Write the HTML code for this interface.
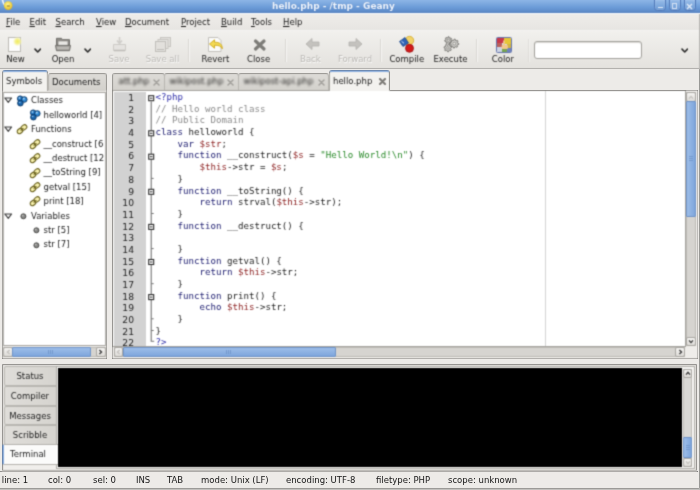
<!DOCTYPE html>
<html>
<head>
<meta charset="utf-8">
<title>hello.php - /tmp - Geany</title>
<style>
*{box-sizing:border-box;margin:0;padding:0}
html,body{width:700px;height:490px;overflow:hidden;background:#edebe8}
body{font-family:"DejaVu Sans","Liberation Sans",sans-serif;font-size:9px;color:#1a1a1a;position:relative}
#root{position:absolute;left:0;top:0;width:700px;height:490px;overflow:hidden;filter:url(#soft)}
.abs{position:absolute}
#title{left:0;top:0;width:700px;height:14px;background:linear-gradient(#8db5e6,#6c9cd8 55%,#5f8dcb 85%,#5a84c0);border-bottom:1px solid #f6f8fb}
#title .t{left:272px;top:0;height:13px;line-height:12px;white-space:nowrap;color:#f1f6fd;font-weight:bold;font-size:9px;text-shadow:0 0 1px #4a74b4}
.wb{top:-1px;width:12px;height:11.500px;border:1px solid #5078b8;border-radius:0 0 3.500px 3.500px;background:rgba(255,255,255,.08);box-shadow:inset 0 0 0 .5px rgba(255,255,255,.18)}
#menu{left:0;top:14px;width:700px;height:16px;background:linear-gradient(#eeece9,#e7e5e2)}
#menu span{position:absolute;top:-1px;line-height:18px;font-size:8.5px;white-space:nowrap}
#menu u{text-decoration:underline}
#tb{left:0;top:30px;width:700px;height:39px;background:linear-gradient(#f6f5f3 0,#f1f0ed 1.5px,#e4e2de);border-bottom:1px solid #d6d4d0}
.lbl{position:absolute;top:23.800px;font-size:8.5px;line-height:11px;text-align:center;white-space:nowrap;transform:translateX(-50%)}
.dis{color:#b9b7b3;text-shadow:0.5px 0.5px 0 #fff}
.sep{position:absolute;top:9px;width:1px;height:23px;background:#d9d7d3;border-right:1px solid #f6f5f3;box-sizing:content-box}
.chev{position:absolute;width:7.500px;height:5.500px}

/* notebook + panes */
.tab{z-index:2;position:absolute;font-size:8.5px;white-space:nowrap;border:1px solid #b8b6b1;border-bottom:none;border-radius:3px 3px 0 0;background:linear-gradient(#dddbd7,#d3d1cc)}
.tab.sel{z-index:3;background:#f3f2ef;border-color:#a9a7a2;border-top:2px solid #86a9d9}
.tab span{position:absolute;white-space:nowrap}
.blur{filter:blur(.9px);color:#2e2d2b}
.tab .blurx{filter:blur(.7px)}
.pane{position:absolute;background:#fff;border:1px solid #a9a7a2}
.row{position:absolute;left:0;height:14px;line-height:14px;font-size:8.5px;white-space:nowrap;color:#222}
.row span{position:absolute;top:0}
.row .ic{position:absolute;top:1.2px;margin-left:-.7px}
.row .tr{position:absolute;left:1px;top:4px}
.tri{position:absolute;width:0;height:0;border-left:3.5px solid transparent;border-right:3.5px solid transparent;border-top:5px solid #555}
.sb{position:absolute;background:#d6d4d0;border:1px solid #bcbab5}
.thumb{position:absolute;background:linear-gradient(#9dbde8,#7ea6dc);border:1px solid #6e93c8;border-radius:1px}
.thumbv{background:linear-gradient(90deg,#9dbde8,#7ea6dc)}
.grip{position:absolute;width:5px;height:4px;background:repeating-linear-gradient(90deg,#6e93c8 0 1px,transparent 1px 2px);opacity:.8}
.gripv{position:absolute;width:4px;height:5px;background:repeating-linear-gradient(#6e93c8 0 1px,transparent 1px 2px);opacity:.8}
.sbtn{position:absolute;background:linear-gradient(#f4f3f1,#dddbd7);border:1px solid #a9a7a2;border-radius:2px}
#code{position:absolute;left:155.5px;top:92px;font-family:"DejaVu Sans Mono","Liberation Mono",monospace;font-size:9.14px;line-height:11.7px;white-space:pre;color:#1c1c1c}
#code div{height:11.7px}
#ln{position:absolute;left:113px;top:92px;width:21px;text-align:right;font-family:"DejaVu Sans","Liberation Sans",sans-serif;font-size:9.2px;line-height:11.7px;color:#222}
#ln div{height:11.7px}
.k{color:#1a1a6e}.c{color:#8a8a8a}.v{color:#8a1c1c}.s{color:#2a8a2a}.t{color:#2c2ca8}
.fold{position:absolute;left:148px;width:7px;height:7px;border:1px solid #444;background:#fff}
.fold:after{content:"";position:absolute;left:1px;top:2px;width:3px;height:1px;background:#444}
.btab{position:absolute;left:4px;width:52.500px;height:20px;font-size:8.5px;line-height:18px;text-align:center;border:1px solid #b8b6b1;border-right:none;border-radius:2px 0 0 2px;background:linear-gradient(90deg,#dfddd9,#d6d4cf);padding-right:1.500px;color:#222}
.btab.sel{background:#fbfbfa;border-color:#b5b3ae;border-left:2.500px solid #7fa3d6;left:1.500px;width:56px;z-index:3;padding-right:5px}
#status span{position:absolute;top:0;line-height:18px;font-size:8.5px;white-space:nowrap;color:#222}
</style>
</head>
<body><svg width="0" height="0" style="position:absolute"><defs><filter id="soft" x="0" y="0" width="100%" height="100%" color-interpolation-filters="sRGB"><feConvolveMatrix order="3" kernelMatrix="0.0311 0.1141 0.0311 0.1141 0.4191 0.1141 0.0311 0.1141 0.0311" edgeMode="duplicate" preserveAlpha="true"/></filter></defs></svg><div id="root">
<div id="title" class="abs">
  <svg class="abs" style="left:1px;top:0" width="16" height="12" viewBox="0 0 16 12"><defs><radialGradient id="lamp" cx=".45" cy=".4" r=".6"><stop offset="0" stop-color="#fff6a0"/><stop offset=".6" stop-color="#f3d84a"/><stop offset="1" stop-color="#d9b233"/></radialGradient></defs><path d="M1.500 0c.3 2.500 1 4 2.500 5.500" stroke="#eef3fa" stroke-width="1.600" fill="none"/><circle cx="7.200" cy="5.600" r="4.300" fill="url(#lamp)"/><path d="M5.800 6h3" stroke="#8a6d1c" stroke-width="1"/></svg>
  <div class="t abs">hello.php - /tmp - Geany</div>
  <div class="wb abs" style="left:654px"></div><div class="abs" style="left:657.500px;top:7px;width:5px;height:1.300px;background:#e4ecf8"></div>
  <div class="wb abs" style="left:668.500px"></div><div class="abs" style="left:671.500px;top:3px;width:5.500px;height:5.500px;border:1px solid #d5e1f3;border-top-width:1.300px"></div>
  <div class="wb abs" style="left:683.500px"></div><svg class="abs" style="left:686px;top:2.500px" width="7" height="7" viewBox="0 0 7 7"><path d="M1 1l5 5M6 1l-5 5" stroke="#e4ecf8" stroke-width="1.300"/></svg>
</div>
<div id="menu" class="abs">
  <span style="left:6px"><u>F</u>ile</span>
  <span style="left:29.500px"><u>E</u>dit</span>
  <span style="left:55.500px"><u>S</u>earch</span>
  <span style="left:96px"><u>V</u>iew</span>
  <span style="left:125px"><u>D</u>ocument</span>
  <span style="left:181px"><u>P</u>roject</span>
  <span style="left:221px"><u>B</u>uild</span>
  <span style="left:251px"><u>T</u>ools</span>
  <span style="left:283px"><u>H</u>elp</span>
</div>
<div id="tb" class="abs">
<!-- New -->
<svg class="abs" style="left:6px;top:5px" width="18" height="18" viewBox="0 0 18 18"><defs><radialGradient id="glow"><stop offset="0" stop-color="#f1ec5e"/><stop offset=".5" stop-color="#f4f08c" stop-opacity=".95"/><stop offset="1" stop-color="#fbfad0" stop-opacity="0"/></radialGradient></defs><rect x="2.5" y="2.5" width="12" height="14" fill="#fdfdfc" stroke="#bdbbb6"/><circle cx="11.5" cy="6.5" r="5" fill="url(#glow)"/></svg>
<svg class="chev" style="left:33.5px;top:17.5px" viewBox="0 0 8 6"><path d="M1 1.2 L4 4.3 L7 1.2" fill="none" stroke="#2b2b2b" stroke-width="1.7" stroke-linecap="round" stroke-linejoin="round"/></svg>
<span class="lbl" style="left:15.5px">New</span>
<!-- Open -->
<svg class="abs" style="left:54px;top:7px" width="18" height="15" viewBox="0 0 18 17" preserveAspectRatio="none"><path d="M2.5 1.5h5l1 1.5h7v6h-13z" fill="#8f8d88" stroke="#6b6965"/><rect x="4" y="4.5" width="10" height="6" fill="#e9e8e5" stroke="#8a8884" stroke-width=".8"/><path d="M1.5 9.5h15l-1 6h-13z" fill="#a7a5a0" stroke="#6b6965"/><path d="M3 12.5h12" stroke="#d0cec9" stroke-width="1"/></svg>
<svg class="chev" style="left:83.5px;top:17.5px" viewBox="0 0 8 6"><path d="M1 1.2 L4 4.3 L7 1.2" fill="none" stroke="#2b2b2b" stroke-width="1.7" stroke-linecap="round" stroke-linejoin="round"/></svg>
<span class="lbl" style="left:63px">Open</span>
<!-- Save (disabled) -->
<svg class="abs" style="left:111px;top:6px" width="17" height="17" viewBox="0 0 17 17" opacity=".75"><path d="M8.5 1v6M6 4.5l2.5 3 2.500-3" fill="none" stroke="#c6c4c0" stroke-width="1.6"/><path d="M2.500 8.500h12v6h-12z" fill="#e3e1de" stroke="#c3c1bc"/><path d="M3 14.500h11" stroke="#b1afab" stroke-width="1.600"/></svg>
<span class="lbl dis" style="left:119px">Save</span>
<!-- Save all (disabled) -->
<svg class="abs" style="left:154px;top:6px" width="19" height="17" viewBox="0 0 19 17" opacity=".8"><rect x="6.500" y="1.500" width="10" height="9" fill="#dfddd9" stroke="#bebcb7"/><rect x="4" y="3.500" width="10" height="9" fill="#e4e2de" stroke="#bebcb7"/><rect x="1.500" y="5.500" width="10" height="10" fill="#e0deda" stroke="#b7b5b0"/><path d="M3 13.500h7" stroke="#b5b3ae"/></svg>
<span class="lbl dis" style="left:162.500px">Save all</span>
<div class="sep" style="left:188px"></div>
<!-- Revert -->
<svg class="abs" style="left:206px;top:5px" width="20" height="18" viewBox="0 0 20 18"><path d="M2.500 2.500h9.500l3 3v11h-12.500z" fill="#fbfbfa" stroke="#c3c1bc"/><path d="M3.500 9l5-4.200v2.400c5 0 7.800 1.800 7.800 6.600c-1.200-2.700-3.600-3.600-7.800-3.600v3z" fill="#f3da55" stroke="#cfa91c" stroke-width=".9" stroke-linejoin="round"/></svg>
<span class="lbl" style="left:215.300px">Revert</span>
<!-- Close -->
<svg class="abs" style="left:251.500px;top:8px" width="16" height="14" viewBox="0 0 16 14"><path d="M3.500 3l8.500 8M12 3l-8.500 8" stroke="#7d7c78" stroke-width="3.200" stroke-linecap="round"/></svg>
<span class="lbl" style="left:258.600px">Close</span>
<div class="sep" style="left:285px"></div>
<!-- Back -->
<svg class="abs" style="left:305px;top:8px" width="15" height="12" viewBox="0 0 15 12"><path d="M1 6l6-5.500v3.500h7v4h-7v3.500z" fill="#c4c2be" stroke="#b3b1ad" stroke-width=".8"/></svg>
<span class="lbl dis" style="left:310.400px">Back</span>
<!-- Forward -->
<svg class="abs" style="left:347.500px;top:8px" width="15" height="12" viewBox="0 0 15 12"><path d="M14 6l-6-5.500v3.500h-7v4h7v3.500z" fill="#c4c2be" stroke="#b3b1ad" stroke-width=".8"/></svg>
<span class="lbl dis" style="left:355px">Forward</span>
<div class="sep" style="left:380px"></div>
<!-- Compile -->
<svg class="abs" style="left:398px;top:5px" width="19" height="18" viewBox="0 0 19 18"><circle cx="11.500" cy="5.500" r="4.200" fill="#f1d36a" stroke="#d2a92a" stroke-width=".8"/><path d="M1.500 6.500l5.500-4 3.500 5.500-5.500 3.500z" fill="#2f63b5" stroke="#1e4685" stroke-width=".8"/><circle cx="11.500" cy="13.300" r="4" fill="#d21a1a" stroke="#9c0f0f" stroke-width=".8"/><path d="M3.500 6.300l2.500 2" stroke="#cfe0f6" stroke-width="1"/></svg>
<span class="lbl" style="left:406.800px">Compile</span>
<!-- Execute -->
<svg class="abs" style="left:443px;top:6px" width="17" height="17" viewBox="0 0 17 17"><path d="M8.83 5.02L8.58 5.78L7.29 5.81L6.91 6.22L6.94 7.50L6.19 7.79L5.36 6.80L4.80 6.75L3.82 7.58L3.12 7.17L3.38 5.91L3.07 5.44L1.81 5.19L1.70 4.39L2.85 3.80L3.02 3.27L2.43 2.12L2.99 1.54L4.16 2.07L4.68 1.88L5.21 0.70L6.02 0.77L6.33 2.02L6.81 2.31L8.06 1.99L8.50 2.66L7.72 3.68L7.80 4.24Z" fill="#cfcecb" stroke="#6f6e6a" stroke-width=".9" stroke-linejoin="round"/><circle cx="5.3" cy="4.3" r="1.1" fill="#f3f2f0" stroke="#77756f" stroke-width=".7"/><path d="M15.80 7.60L15.71 8.48L14.35 8.86L14.04 9.43L14.48 10.78L13.80 11.34L12.56 10.65L11.94 10.84L11.30 12.10L10.42 12.01L10.04 10.65L9.47 10.34L8.12 10.78L7.56 10.10L8.25 8.86L8.06 8.24L6.80 7.60L6.89 6.72L8.25 6.34L8.56 5.77L8.12 4.42L8.80 3.86L10.04 4.55L10.66 4.36L11.30 3.10L12.18 3.19L12.56 4.55L13.13 4.86L14.48 4.42L15.04 5.10L14.35 6.34L14.54 6.96Z" fill="#cfcecb" stroke="#6f6e6a" stroke-width=".9" stroke-linejoin="round"/><circle cx="11.3" cy="7.6" r="1.4" fill="#f3f2f0" stroke="#77756f" stroke-width=".7"/><path d="M8.32 13.77L7.82 14.48L6.53 14.18L5.98 14.48L5.57 15.74L4.70 15.79L4.14 14.59L3.56 14.36L2.32 14.82L1.73 14.17L2.32 12.98L2.14 12.38L1.01 11.70L1.15 10.84L2.44 10.56L2.80 10.04L2.63 8.73L3.39 8.30L4.42 9.14L5.04 9.10L5.96 8.15L6.77 8.48L6.76 9.80L7.18 10.27L8.50 10.39L8.74 11.23L7.70 12.04L7.59 12.66Z" fill="#cfcecb" stroke="#6f6e6a" stroke-width=".9" stroke-linejoin="round"/><circle cx="4.9" cy="11.9" r="1.2" fill="#f3f2f0" stroke="#77756f" stroke-width=".7"/></svg>
<span class="lbl" style="left:450.500px">Execute</span>
<div class="sep" style="left:475.500px"></div>
<!-- Color -->
<svg class="abs" style="left:495.500px;top:6.500px" width="16" height="16" viewBox="0 0 16 16"><rect x=".5" y=".5" width="15" height="15" rx="1" fill="#d9dce6" stroke="#6474ad" stroke-width="1"/><rect x="1" y="1" width="7" height="5" fill="#c8384a"/><rect x="8" y="1" width="7" height="6" fill="#e6c636"/><rect x="1" y="6" width="5" height="4" fill="#b9605c"/><rect x="11" y="7" width="4" height="4" fill="#d0b444"/><rect x="1" y="10" width="5" height="5" fill="#cdd4e3"/><rect x="6" y="11" width="5" height="4" fill="#78a552"/><rect x="11" y="11" width="4" height="4" fill="#6f82bd"/><path d="M8 3.500v5.500M6.500 9h4.500v2h-4.500z" stroke="#f2c88c" stroke-width="1.800" fill="#f2c88c" stroke-linejoin="round"/></svg>
<span class="lbl" style="left:502.900px">Color</span>
<div class="sep" style="left:527.500px;opacity:.6"></div>
<div class="abs" style="left:534px;top:11px;width:108px;height:18px;background:#fff;border:1px solid #a3a19c;border-radius:3px;box-shadow:inset 0 1px 1px #d9d7d3"></div>
<svg class="chev" style="left:680.500px;top:17.500px" viewBox="0 0 8 6"><path d="M1 1.200 L4 4.300 L7 1.200" fill="none" stroke="#2b2b2b" stroke-width="1.700" stroke-linecap="round" stroke-linejoin="round"/></svg>
</div>

<!-- sidebar notebook -->
<div class="tab sel" style="left:1.500px;top:70px;width:46px;height:21px"><span style="left:3.500px;top:3.500px">Symbols</span></div>
<div class="tab" style="left:47.500px;top:73px;width:59px;height:17px"><span style="left:3.500px;top:2.500px">Documents</span></div>
<div class="abs" style="left:1.500px;top:89.500px;width:105.500px;height:269px;border:1px solid #d2d0cc;background:#efedea"></div><div class="pane" id="side" style="left:2.500px;top:91.500px;width:103px;height:254.500px;overflow:hidden"><div class="abs" style="left:-.5px;top:-1.5px;width:100.800px;height:256px;overflow:hidden"><div class="row" style="top:2.4px"><svg class="tr" width="8.500" height="6.500" viewBox="0 0 9 7"><path d="M.8 1h7.400l-3.700 4.800z" fill="#f4f4f4" stroke="#3a3a3a" stroke-width="1.100" stroke-linejoin="round"/></svg><svg class="ic" style="left:14.0px" width="12" height="12" viewBox="0 0 12 12"><g stroke="#0a3563" stroke-width=".9"><circle cx="4.200" cy="3.700" r="2.800" fill="#2277c4"/><circle cx="8.300" cy="4.500" r="2.800" fill="#2f8ad6"/><circle cx="4.400" cy="8.200" r="2.800" fill="#1a66ad"/></g><circle cx="3.500" cy="2.900" r=".9" fill="#a8d3f5"/><circle cx="7.800" cy="3.700" r=".9" fill="#b9dcf8"/><circle cx="3.700" cy="7.500" r=".8" fill="#8fc3ee"/></svg><span style="left:28.0px">Classes</span></div><div class="row" style="top:16.8px"><svg class="ic" style="left:26.5px" width="12" height="12" viewBox="0 0 12 12"><g stroke="#0a3563" stroke-width=".9"><circle cx="4.200" cy="3.700" r="2.800" fill="#2277c4"/><circle cx="8.300" cy="4.500" r="2.800" fill="#2f8ad6"/><circle cx="4.400" cy="8.200" r="2.800" fill="#1a66ad"/></g><circle cx="3.500" cy="2.900" r=".9" fill="#a8d3f5"/><circle cx="7.800" cy="3.700" r=".9" fill="#b9dcf8"/><circle cx="3.700" cy="7.500" r=".8" fill="#8fc3ee"/></svg><span style="left:40.5px">helloworld [4]</span></div><div class="row" style="top:31.2px"><svg class="tr" width="8.500" height="6.500" viewBox="0 0 9 7"><path d="M.8 1h7.400l-3.700 4.800z" fill="#f4f4f4" stroke="#3a3a3a" stroke-width="1.100" stroke-linejoin="round"/></svg><svg class="ic" style="left:14.0px" width="12" height="12" viewBox="0 0 12 12"><g fill="#f8f2ae" stroke="#665d1a" stroke-width="1.050"><rect x="1" y="5.800" width="6" height="4.400" rx="2.200" transform="rotate(-38 4 8)"/><rect x="5" y="2.200" width="6" height="4.400" rx="2.200" transform="rotate(-38 8 4.400)"/></g><path d="M4.600 7.500l2.800-2.300" stroke="#665d1a" stroke-width="1.100"/></svg><span style="left:28.0px">Functions</span></div><div class="row" style="top:45.6px"><svg class="ic" style="left:26.5px" width="12" height="12" viewBox="0 0 12 12"><g fill="#f8f2ae" stroke="#665d1a" stroke-width="1.050"><rect x="1" y="5.800" width="6" height="4.400" rx="2.200" transform="rotate(-38 4 8)"/><rect x="5" y="2.200" width="6" height="4.400" rx="2.200" transform="rotate(-38 8 4.400)"/></g><path d="M4.600 7.500l2.800-2.300" stroke="#665d1a" stroke-width="1.100"/></svg><span style="left:40.5px">__construct [6]</span></div><div class="row" style="top:60.0px"><svg class="ic" style="left:26.5px" width="12" height="12" viewBox="0 0 12 12"><g fill="#f8f2ae" stroke="#665d1a" stroke-width="1.050"><rect x="1" y="5.800" width="6" height="4.400" rx="2.200" transform="rotate(-38 4 8)"/><rect x="5" y="2.200" width="6" height="4.400" rx="2.200" transform="rotate(-38 8 4.400)"/></g><path d="M4.600 7.500l2.800-2.300" stroke="#665d1a" stroke-width="1.100"/></svg><span style="left:40.5px">__destruct [12]</span></div><div class="row" style="top:74.4px"><svg class="ic" style="left:26.5px" width="12" height="12" viewBox="0 0 12 12"><g fill="#f8f2ae" stroke="#665d1a" stroke-width="1.050"><rect x="1" y="5.800" width="6" height="4.400" rx="2.200" transform="rotate(-38 4 8)"/><rect x="5" y="2.200" width="6" height="4.400" rx="2.200" transform="rotate(-38 8 4.400)"/></g><path d="M4.600 7.500l2.800-2.300" stroke="#665d1a" stroke-width="1.100"/></svg><span style="left:40.5px">__toString [9]</span></div><div class="row" style="top:88.8px"><svg class="ic" style="left:26.5px" width="12" height="12" viewBox="0 0 12 12"><g fill="#f8f2ae" stroke="#665d1a" stroke-width="1.050"><rect x="1" y="5.800" width="6" height="4.400" rx="2.200" transform="rotate(-38 4 8)"/><rect x="5" y="2.200" width="6" height="4.400" rx="2.200" transform="rotate(-38 8 4.400)"/></g><path d="M4.600 7.500l2.800-2.300" stroke="#665d1a" stroke-width="1.100"/></svg><span style="left:40.5px">getval [15]</span></div><div class="row" style="top:103.2px"><svg class="ic" style="left:26.5px" width="12" height="12" viewBox="0 0 12 12"><g fill="#f8f2ae" stroke="#665d1a" stroke-width="1.050"><rect x="1" y="5.800" width="6" height="4.400" rx="2.200" transform="rotate(-38 4 8)"/><rect x="5" y="2.200" width="6" height="4.400" rx="2.200" transform="rotate(-38 8 4.400)"/></g><path d="M4.600 7.500l2.800-2.300" stroke="#665d1a" stroke-width="1.100"/></svg><span style="left:40.5px">print [18]</span></div><div class="row" style="top:117.6px"><svg class="tr" width="8.500" height="6.500" viewBox="0 0 9 7"><path d="M.8 1h7.400l-3.700 4.800z" fill="#f4f4f4" stroke="#3a3a3a" stroke-width="1.100" stroke-linejoin="round"/></svg><svg class="ic" style="left:14.0px" width="12" height="12" viewBox="0 0 12 12"><circle cx="7.400" cy="6.300" r="2.500" fill="#8a8a88" stroke="#3e3e3c" stroke-width=".9"/><circle cx="6.700" cy="5.600" r=".8" fill="#c9c9c7"/></svg><span style="left:28.0px">Variables</span></div><div class="row" style="top:132.0px"><svg class="ic" style="left:26.5px" width="12" height="12" viewBox="0 0 12 12"><circle cx="7.400" cy="6.300" r="2.500" fill="#8a8a88" stroke="#3e3e3c" stroke-width=".9"/><circle cx="6.700" cy="5.600" r=".8" fill="#c9c9c7"/></svg><span style="left:40.5px">str [5]</span></div><div class="row" style="top:146.4px"><svg class="ic" style="left:26.5px" width="12" height="12" viewBox="0 0 12 12"><circle cx="7.400" cy="6.300" r="2.500" fill="#8a8a88" stroke="#3e3e3c" stroke-width=".9"/><circle cx="6.700" cy="5.600" r=".8" fill="#c9c9c7"/></svg><span style="left:40.5px">str [7]</span></div></div></div>
<div class="sb" style="left:3px;top:346.500px;width:102.500px;height:10.500px"></div>
<div class="sbtn" style="left:3px;top:346.500px;width:9.500px;height:10.500px"></div><svg class="abs" style="left:5.500px;top:349px" width="5" height="6" viewBox="0 0 5 6"><path d="M3.600 1L1.400 3l2.200 2" fill="none" stroke="#c3c1bd" stroke-width="1.300"/></svg>
<div class="thumb" style="left:12px;top:346.500px;width:79px;height:10.500px"></div>
<div class="grip" style="left:48px;top:350px"></div>
<div class="sbtn" style="left:95.500px;top:346.500px;width:10px;height:10.500px"></div><svg class="abs" style="left:98px;top:349px" width="5" height="6" viewBox="0 0 5 6"><path d="M1.400 1l2.200 2-2.200 2" fill="none" stroke="#333" stroke-width="1.200"/></svg>

<!-- editor notebook -->
<div class="tab" style="left:112px;top:72.500px;width:52.500px;height:17.500px"><span class="blur" style="left:5.500px;top:2.500px">att.php</span><svg class="abs" style="left:39.5px;top:5px" width="7" height="7" viewBox="0 0 7 7"><path d="M1 1l5 5M6 1l-5 5" stroke="#a3a19d" stroke-width="1.500" style="filter:blur(.5px)" stroke-linecap="round"/></svg></div>
<div class="tab" style="left:164px;top:72.500px;width:74.500px;height:17.500px"><span class="blur" style="left:4.500px;top:2.500px">wikipost.php</span><svg class="abs" style="left:61.5px;top:5px" width="7" height="7" viewBox="0 0 7 7"><path d="M1 1l5 5M6 1l-5 5" stroke="#a3a19d" stroke-width="1.500" style="filter:blur(.5px)" stroke-linecap="round"/></svg></div>
<div class="tab" style="left:238px;top:72.500px;width:91px;height:17.500px"><span class="blur" style="left:4.500px;top:2.500px">wikipost-api.php</span><svg class="abs" style="left:78.5px;top:5px" width="7" height="7" viewBox="0 0 7 7"><path d="M1 1l5 5M6 1l-5 5" stroke="#a3a19d" stroke-width="1.500" style="filter:blur(.5px)" stroke-linecap="round"/></svg></div>
<div class="tab sel" style="left:328.500px;top:70px;width:61.500px;height:21px"><span style="left:3.500px;top:3.500px">hello.php</span><svg class="abs" style="left:49px;top:5.500px" width="7" height="7" viewBox="0 0 7 7"><path d="M1 1l5 5M6 1l-5 5" stroke="#7b7975" stroke-width="2.100" stroke-linecap="round"/></svg></div>
<div class="abs" style="left:111.500px;top:89.500px;width:586px;height:269px;border:1px solid #d2d0cc;border-right-color:#e4e2de;background:#efedea"></div><div class="pane" id="ed" style="left:112px;top:89.500px;width:574px;height:257px;border-color:#a5a39e"></div>
<div id="lnbg" class="abs" style="left:113.500px;top:91.500px;width:32px;height:254px;background:#d2d2d2"></div>
<div id="edge" class="abs" style="left:545px;top:90.500px;width:1px;height:255px;background:#d4d4d4"></div>
<div id="ln"><div>1</div><div>2</div><div>3</div><div>4</div><div>5</div><div>6</div><div>7</div><div>8</div><div>9</div><div>10</div><div>11</div><div>12</div><div>13</div><div>14</div><div>15</div><div>16</div><div>17</div><div>18</div><div>19</div><div>20</div><div>21</div><div>22</div></div>
<svg class="abs" style="left:146px;top:91px" width="10" height="255" viewBox="0 0 10 255"><path d="M5.200 10.5V250.2H8.200" fill="none" stroke="#747474" stroke-width="1.100"/><path d="M5.200 87.4H7.700" stroke="#747474" stroke-width="1"/><path d="M5.200 122.5H7.700" stroke="#747474" stroke-width="1"/><path d="M5.200 157.6H7.700" stroke="#747474" stroke-width="1"/><path d="M5.200 192.7H7.700" stroke="#747474" stroke-width="1"/><path d="M5.200 227.8H7.700" stroke="#747474" stroke-width="1"/><path d="M5.200 239.5H7.700" stroke="#747474" stroke-width="1"/><rect x="2.700" y="4.7" width="5" height="5" fill="#fff" stroke="#2e2e2e" stroke-width="1.100"/><path d="M3.900 7.2H6.500" stroke="#2e2e2e" stroke-width="1"/><rect x="2.700" y="39.8" width="5" height="5" fill="#fff" stroke="#2e2e2e" stroke-width="1.100"/><path d="M3.900 42.3H6.500" stroke="#2e2e2e" stroke-width="1"/><rect x="2.700" y="63.2" width="5" height="5" fill="#fff" stroke="#2e2e2e" stroke-width="1.100"/><path d="M3.900 65.7H6.500" stroke="#2e2e2e" stroke-width="1"/><rect x="2.700" y="98.3" width="5" height="5" fill="#fff" stroke="#2e2e2e" stroke-width="1.100"/><path d="M3.900 100.8H6.500" stroke="#2e2e2e" stroke-width="1"/><rect x="2.700" y="133.4" width="5" height="5" fill="#fff" stroke="#2e2e2e" stroke-width="1.100"/><path d="M3.900 135.9H6.500" stroke="#2e2e2e" stroke-width="1"/><rect x="2.700" y="168.5" width="5" height="5" fill="#fff" stroke="#2e2e2e" stroke-width="1.100"/><path d="M3.900 171.0H6.500" stroke="#2e2e2e" stroke-width="1"/><rect x="2.700" y="203.6" width="5" height="5" fill="#fff" stroke="#2e2e2e" stroke-width="1.100"/><path d="M3.900 206.1H6.500" stroke="#2e2e2e" stroke-width="1"/></svg>
<div id="code"><div><span class="t">&lt;?php</span></div><div><span class="c">// Hello world class</span></div><div><span class="c">// Public Domain</span></div><div><span class="k">class</span> helloworld {</div><div>    <span class="k">var</span> <span class="v">$str</span>;</div><div>    <span class="k">function</span> __construct(<span class="v">$s</span> = <span class="s">"Hello World!\n"</span>) {</div><div>        <span class="v">$this</span>-&gt;str = <span class="v">$s</span>;</div><div>    }</div><div>    <span class="k">function</span> __toString() {</div><div>        <span class="k">return</span> strval(<span class="v">$this</span>-&gt;str);</div><div>    }</div><div>    <span class="k">function</span> __destruct() {</div><div></div><div>    }</div><div>    <span class="k">function</span> getval() {</div><div>        <span class="k">return</span> <span class="v">$this</span>-&gt;str;</div><div>    }</div><div>    <span class="k">function</span> print() {</div><div>        <span class="k">echo</span> <span class="v">$this</span>-&gt;str;</div><div>    }</div><div>}</div><div><span class="t">?&gt;</span></div></div>
<div class="sb" style="left:685.500px;top:91.500px;width:10.500px;height:254.500px"></div>
<div class="sbtn" style="left:685.500px;top:91.500px;width:10.500px;height:10px"></div><svg class="abs" style="left:688px;top:94.500px" width="6" height="5" viewBox="0 0 6 5"><path d="M1 3.600L3 1.400l2 2.200" fill="none" stroke="#c3c1bd" stroke-width="1.300"/></svg>
<div class="thumb thumbv" style="left:685.500px;top:101px;width:10.500px;height:115.500px"></div>
<div class="gripv" style="left:689px;top:156px"></div>
<div class="sbtn" style="left:685.500px;top:336.500px;width:10.500px;height:9.500px"></div><svg class="abs" style="left:688px;top:339px" width="6" height="5" viewBox="0 0 6 5"><path d="M1 1.400L3 3.600l2-2.200" fill="none" stroke="#333" stroke-width="1.200"/></svg>
<div class="sb" style="left:113.500px;top:346.500px;width:571.500px;height:10.500px"></div>
<div class="sbtn" style="left:113.500px;top:346.500px;width:9.500px;height:10.500px"></div><svg class="abs" style="left:116px;top:349px" width="5" height="6" viewBox="0 0 5 6"><path d="M3.600 1L1.400 3l2.200 2" fill="none" stroke="#c3c1bd" stroke-width="1.300"/></svg>
<div class="thumb" style="left:123px;top:346.500px;width:212.500px;height:10.500px"></div>
<div class="grip" style="left:226px;top:350px"></div>
<div class="sbtn" style="left:675px;top:346.500px;width:10px;height:10.500px"></div><svg class="abs" style="left:677.500px;top:349px" width="5" height="6" viewBox="0 0 5 6"><path d="M1.400 1l2.200 2-2.200 2" fill="none" stroke="#333" stroke-width="1.200"/></svg>

<!-- bottom panel -->
<div class="abs" style="left:1.500px;top:364px;width:695.500px;height:106.500px;border:1px solid #a8a6a2;border-radius:1px;background:#f0eeeb"></div>
<div class="btab" style="top:365.500px;height:20.500px">Status</div>
<div class="btab" style="top:385.500px;height:20.500px">Compiler</div>
<div class="btab" style="top:405.500px;height:19.500px">Messages</div>
<div class="btab" style="top:424.500px;height:20px">Scribble</div>
<div class="btab sel" style="top:444px;height:20.500px">Terminal</div>
<div class="abs" style="left:56px;top:365.500px;width:638.500px;height:103.500px;border:1px solid #aeaca7;background:#f7f6f4"></div>
<div class="abs" style="left:58px;top:368px;width:624px;height:99px;background:#000"></div>
<div class="sb" style="left:682.500px;top:368.500px;width:9.500px;height:98px;background:#d9d8d5"></div>
<div class="sbtn" style="left:682.500px;top:368.500px;width:9.500px;height:9px"></div><svg class="abs" style="left:684.500px;top:371px" width="6" height="5" viewBox="0 0 6 5"><path d="M1 3.600L3 1.400l2 2.200" fill="none" stroke="#3a3a3a" stroke-width="1.400"/></svg>
<div class="thumb thumbv" style="left:682.500px;top:436.500px;width:9.500px;height:21.500px"></div>
<div class="gripv" style="left:685.500px;top:445px"></div>
<div class="sbtn" style="left:682.500px;top:457.500px;width:9.500px;height:9px"></div><svg class="abs" style="left:684.500px;top:459.500px" width="6" height="5" viewBox="0 0 6 5"><path d="M1 1.400L3 3.600l2-2.200" fill="none" stroke="#c3c1bd" stroke-width="1.300"/></svg>
<div class="abs" style="left:0;top:488px;width:700px;height:2px;background:linear-gradient(#b4b3b0,#c9c8c5)"></div>
<div class="abs" style="left:698.800px;top:14px;width:1.200px;height:476px;background:#b9b8b5"></div>
<div class="abs" style="left:0;top:471.200px;width:698px;height:1px;background:#dddbd8"></div>
<div id="status" class="abs" style="left:0;top:471px;width:700px;height:19px">
<span style="left:1.800px">line: 1</span><span style="left:48px">col: 0</span><span style="left:93px">sel: 0</span><span style="left:136px">INS</span><span style="left:167px">TAB</span><span style="left:201px">mode: Unix (LF)</span><span style="left:286px">encoding: UTF-8</span><span style="left:376px">filetype: PHP</span><span style="left:448px">scope: unknown</span>
</div>
</div></body>
</html>
